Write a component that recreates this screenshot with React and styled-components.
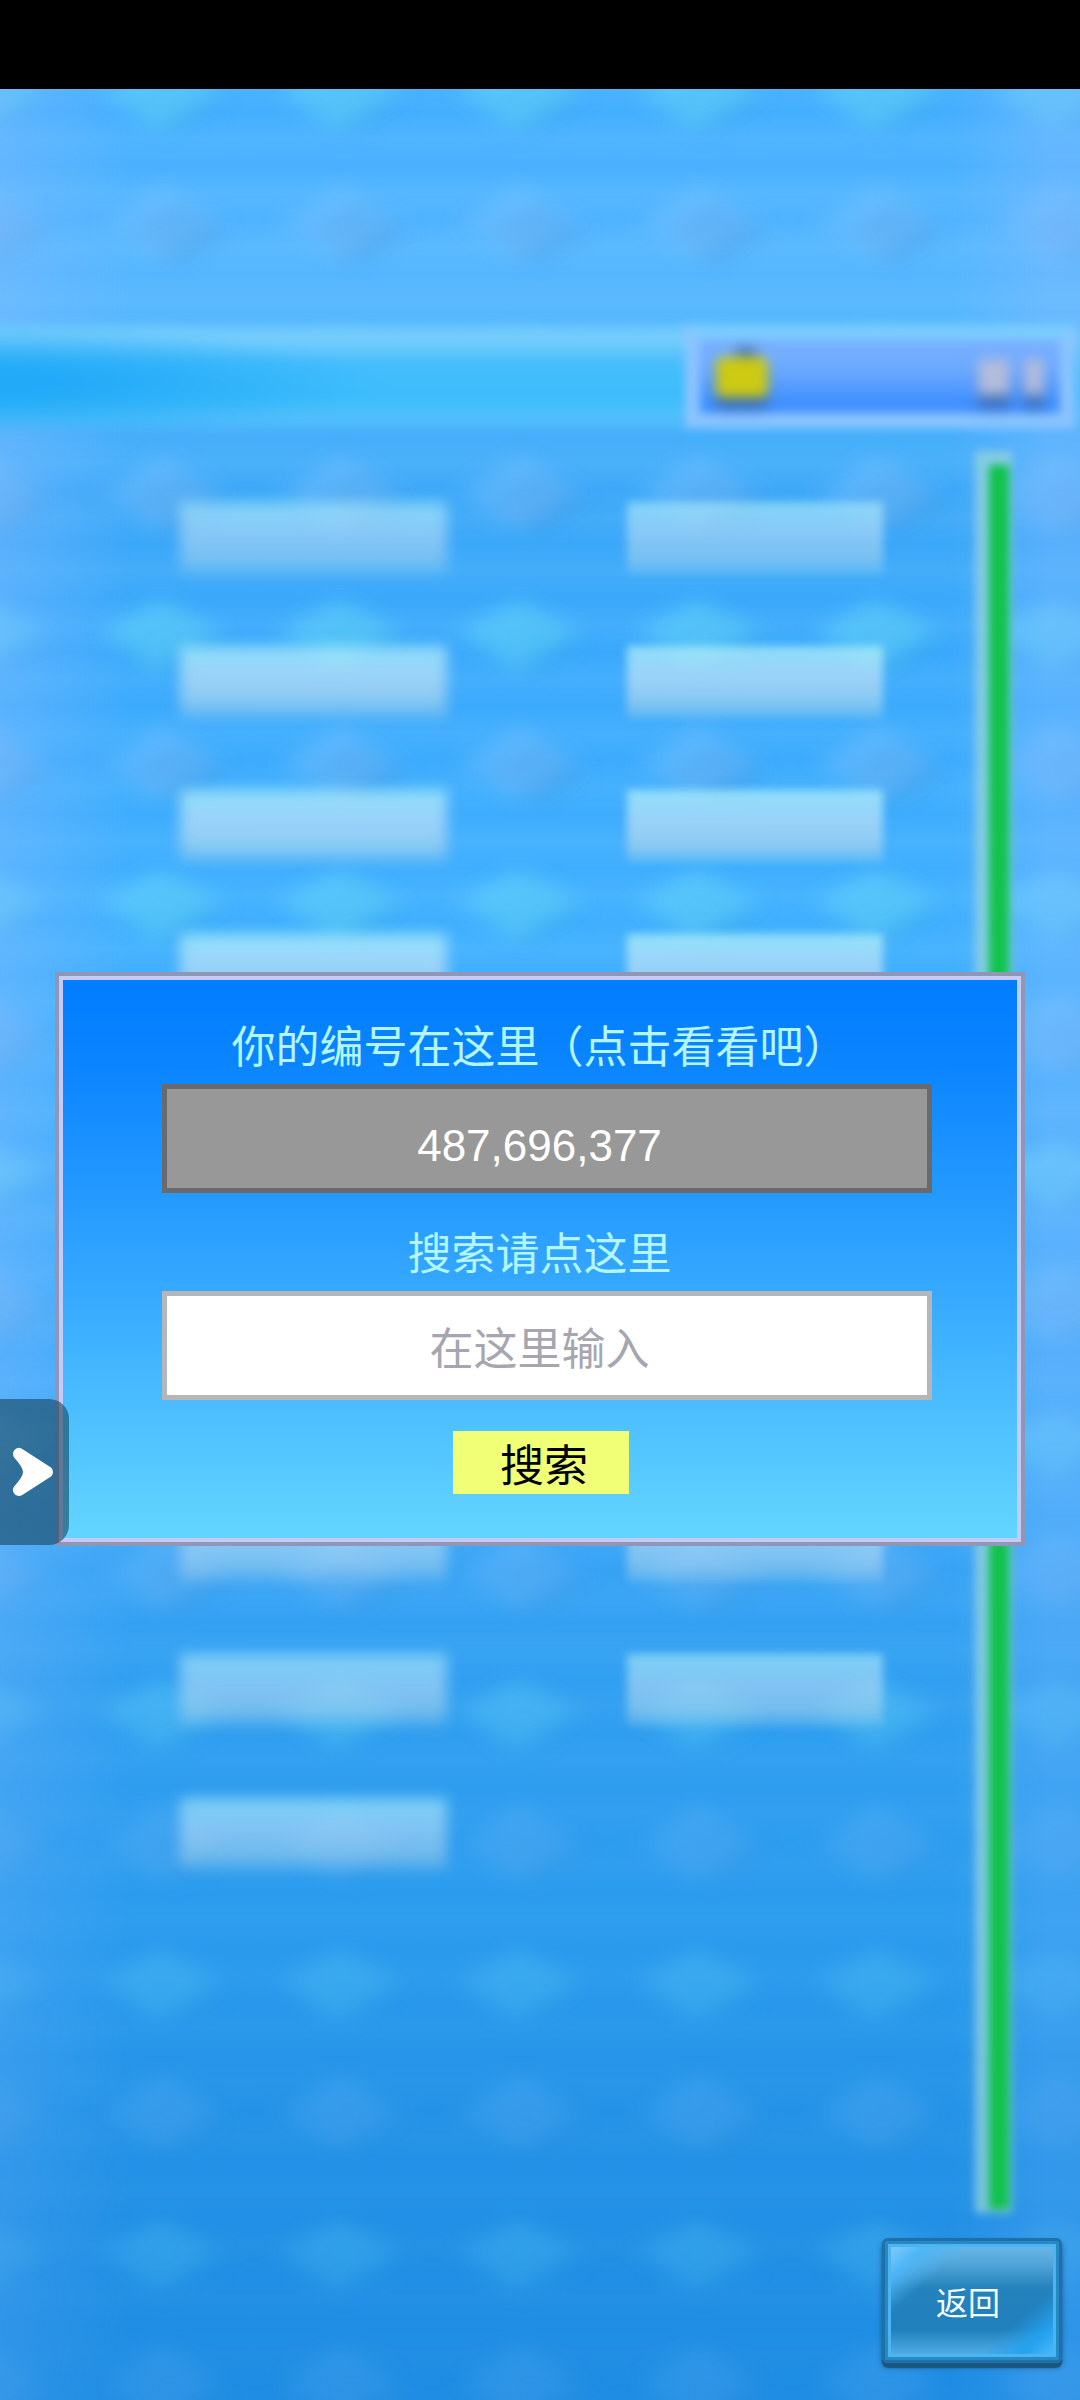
import styled, { createGlobalStyle } from 'styled-components';

const GlobalStyle = createGlobalStyle`
  * {
    box-sizing: border-box;
  }
  body {
    margin: 0;
    background: #000;
    font-family: 'Liberation Sans', 'Noto Sans CJK SC', sans-serif;
  }
`;

const Page = styled.div`
  display: flex;
  flex-direction: column;
  min-height: 100vh;
`;

const StatusBar = styled.div`
  height: 89px;
  background: #000;
`;

const Stage = styled.main`
  position: relative;
  flex: 1;
  display: grid;
  overflow: hidden;
  background: linear-gradient(
    #47b0ff,
    #5cbaff 8%,
    #4fb4fc 14%,
    #3fa9f8 18%,
    #3eabfc 24%,
    #44b2ff 36%,
    #3fa8f8 60%,
    #329ff0 69%,
    #2b9bed 80%,
    #2492e6 88%,
    #1e8ce2
  );
`;

const Wallpaper = styled.svg`
  position: absolute;
  inset: 0;
  width: 100%;
  height: 100%;
  mask-image: linear-gradient(#000 50%, rgba(0, 0, 0, 0.5) 75%, rgba(0, 0, 0, 0.35));
`;

const Scene = styled.div`
  grid-area: 1 / 1;
  position: relative;
  display: flex;
  flex-direction: column;
`;

const TopBar = styled.div`
  display: flex;
  justify-content: flex-end;
  margin: 230px 0 0 -20px;
  padding: 6px 5px 4px 0;
  background:
    radial-gradient(
      ellipse 36% 50% at 0 56%,
      rgba(32, 168, 247, 0.95) 20%,
      rgba(32, 168, 247, 0)
    ),
    linear-gradient(
      rgba(116, 204, 252, 0),
      #74ccfc 12% 20%,
      #44bdfc 40%,
      #3cbcfc 70%,
      #50c0fa 86%,
      rgba(80, 188, 250, 0)
    );
  filter: blur(5px);
`;

const CoinBox = styled.div`
  display: flex;
  align-items: center;
  justify-content: space-between;
  width: 390px;
  height: 103px;
  padding: 0 16px;
  border: 15px solid #8cc4ff;
  border-top-color: #7accff;
  background: linear-gradient(#7ab0ff, #6ba9ff 40%, #4090ff 85%);
`;

const Coin = styled.div`
  width: 52px;
  height: 40px;
  border-radius: 6px;
  background: #ccca12;
  box-shadow:
    0 12px 6px #3c70b4,
    4px -24px 6px -16px #3a5c8c;
  filter: blur(3px);
`;

const Digits = styled.div`
  display: flex;
  gap: 14px;
`;

const Digit = styled.i`
  width: ${(p) => p.$width}px;
  height: 36px;
  background: #b4bcdc;
  box-shadow: 0 14px 4px #3b70bc;
  filter: blur(4px);
`;

const Content = styled.div`
  flex: 1;
  display: flex;
  gap: 92px;
  padding: 19px 68px 0 180px;
`;

const List = styled.div`
  flex: 1;
  display: grid;
  grid-template-columns: 267fr 256fr;
  grid-auto-rows: 72px;
  gap: 72px 180px;
  align-content: start;
  padding-top: 51px;
`;

const Tile = styled.div`
  background: linear-gradient(
    rgba(172, 240, 250, 0.75),
    rgba(198, 226, 246, 0.68) 45%,
    rgba(188, 220, 236, 0.6) 75%,
    rgba(165, 210, 230, 0.3)
  );
  opacity: ${(p) => (p.$dim ? 0.8 : 1)};
  filter: blur(${(p) => (p.$soft ? 7 : 4)}px);
`;

const Rail = styled.div`
  width: 37px;
  border: solid rgba(150, 212, 220, 0.75);
  border-width: 14px 3px 4px 14px;
  background: #10c24a;
  background-clip: padding-box;
  filter: blur(4px);
`;

const Footer = styled.footer`
  display: flex;
  justify-content: flex-end;
  padding: 25px 18px 37px;
`;

const BackButton = styled.button`
  width: 180px;
  height: 125px;
  padding: 0 8px 0 0;
  border: 3px solid #1f70a8;
  border-radius: 6px;
  background:
    linear-gradient(140deg, #8fd2ff, #4fb6f6 15%, rgba(38, 160, 236, 0) 29%),
    linear-gradient(-40deg, #5cc0fc, #25a2f0 14%, rgba(38, 160, 236, 0) 28%),
    linear-gradient(
      #6cbcec,
      #58aadc 16%,
      #2482bc 40%,
      #2080bc 74%,
      #3f9cd6 88%,
      #58b8f0
    );
  box-shadow:
    inset 0 0 0 3px #2688c4,
    inset 0 0 0 6px #4cb4ee,
    0 5px 1px #1a587f,
    0 4px 5px 1px rgba(20, 84, 130, 0.6);
  color: #f4fdff;
  font: 32px/48px 'Noto Sans CJK SC', sans-serif;
`;

const Dialog = styled.form`
  grid-area: 1 / 1;
  align-self: center;
  position: relative;
  display: flex;
  flex-direction: column;
  margin: 29px 55px 0;
  padding: 28px 89px 48px 103px;
  border: solid #9096b6;
  border-width: 4px;
  box-shadow: inset 0 0 0 4px #c6caf6;
  background: linear-gradient(#007cff, #0a84ff 14%, #35a8ff 55%, #64d6ff);
`;

const Label = styled.label`
  margin-top: 10px;
  padding-right: 15px;
  color: #b4f6ff;
  font: 44px/60px 'Noto Sans CJK SC', sans-serif;
  text-align: center;
`;

const Field = styled.input`
  width: 100%;
  height: 109px;
  margin: 10px 0 18px;
  padding: 8px 15px 0 0;
  border: 5px solid #b4b6ba;
  border-radius: 0;
  outline: 0;
  background: #fff;
  color: #333;
  font: 44px 'Liberation Sans', 'Noto Sans CJK SC', sans-serif;
  text-align: center;

  &::placeholder {
    color: #a6a6b0;
    opacity: 1;
  }

  &:read-only {
    padding-top: 14px;
    border-color: #6a6a6c;
    background: #989898;
    color: #fff;
  }
`;

const SearchButton = styled.button`
  align-self: center;
  width: 176px;
  height: 63px;
  margin: 13px 12px 0 0;
  padding: 0 0 0 6px;
  border: 0;
  background: #f0ff76;
  color: #000;
  font: 44px/64px 'Noto Sans CJK SC', sans-serif;
`;

// sits over the dialog's left edge
const DrawerHandle = styled.button`
  position: absolute;
  left: 0;
  top: 1310px;
  width: 69px;
  height: 146px;
  padding: 0;
  border: 0;
  border-radius: 0 20px 20px 0;
  background: rgba(24, 68, 92, 0.6);

  svg {
    display: block;
  }
`;

const tiles = Array.from({ length: 19 }, (_, i) => i);

const Pattern = () => (
  <Wallpaper aria-hidden='true'>
    <defs>
      <filter id='soft' x='-40%' y='-60%' width='180%' height='220%'>
        <feGaussianBlur stdDeviation='12 9' />
      </filter>
      <linearGradient id='wash'>
        <stop offset='0' stopColor='#84bcff' stopOpacity='0.42' />
        <stop offset='0.12' stopColor='#84bcff' stopOpacity='0' />
        <stop offset='0.88' stopColor='#84bcff' stopOpacity='0' />
        <stop offset='0.97' stopColor='#84bcff' stopOpacity='0.4' />
      </linearGradient>
      <linearGradient id='band' x2='0' y2='1'>
        <stop offset='0' stopColor='#2098f8' stopOpacity='0.1' />
        <stop offset='0.5' stopColor='#70c8ff' stopOpacity='0.12' />
        <stop offset='1' stopColor='#2098f8' stopOpacity='0.1' />
      </linearGradient>
      <pattern
        id='bands'
        width='20'
        height='54'
        y='23'
        patternUnits='userSpaceOnUse'
      >
        <rect width='20' height='54' fill='url(#band)' />
      </pattern>
      <pattern
        id='gems'
        width='179'
        height='270'
        x='72'
        y='-64'
        patternUnits='userSpaceOnUse'
      >
        <g filter='url(#soft)'>
          <path d='M98 40 152 78 94 112 44 78Z' fill='#28a0d4' opacity='0.26' />
          <path d='M88 34 148 66 84 106 30 66Z' fill='#6cdcfc' opacity='0.48' />
        </g>
        <g filter='url(#soft)'>
          <path d='M104 176 156 208 104 240 56 208Z' fill='#3080cc' opacity='0.28' />
          <path d='M90 160 148 198 88 234 32 198Z' fill='#80c6ff' opacity='0.42' />
        </g>
      </pattern>
    </defs>
    <rect width='100%' height='100%' fill='url(#bands)' />
    <rect width='100%' height='100%' fill='url(#gems)' />
    <rect width='100%' height='100%' fill='url(#wash)' />
  </Wallpaper>
);

export default function App() {
  return (
    <Page>
      <GlobalStyle />
      <StatusBar />
      <Stage>
        <Pattern />
        <Scene>
          <TopBar>
            <CoinBox>
              <Coin />
              <Digits>
                <Digit $width={32} />
                <Digit $width={20} />
              </Digits>
            </CoinBox>
          </TopBar>
          <Content>
            <List>
              {tiles.map((i) => (
                <Tile key={i} $soft={i % 2 === 0} $dim={i < 2 || i > 13} />
              ))}
            </List>
            <Rail />
          </Content>
          <Footer>
            <BackButton type='button'>返回</BackButton>
          </Footer>
        </Scene>
        <Dialog onSubmit={(e) => e.preventDefault()}>
          <Label htmlFor='my-id'>你的编号在这里（点击看看吧）</Label>
          <Field id='my-id' readOnly value='487,696,377' />
          <Label htmlFor='search-id'>搜索请点这里</Label>
          <Field id='search-id' placeholder='在这里输入' />
          <SearchButton type='submit'>搜索</SearchButton>
        </Dialog>
        <DrawerHandle type='button' aria-label='展开'>
          <svg width='69' height='146' viewBox='0 0 69 146'>
            <path
              d='M19 55 47 73 19 91Q29 80 29 73 29 66 19 55Z'
              fill='#fff'
              stroke='#fff'
              strokeWidth='12'
              strokeLinejoin='round'
            />
          </svg>
        </DrawerHandle>
      </Stage>
    </Page>
  );
}
